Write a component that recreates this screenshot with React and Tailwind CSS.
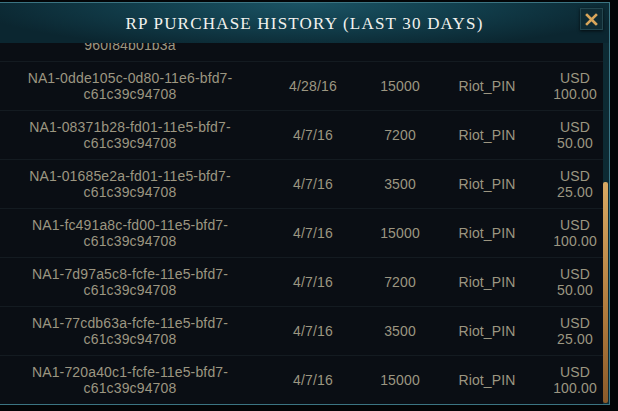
import React from "react";

const purchases = [
  { id: ["NA1-1b6e0f2c-0d81-11e6-9c4a-", "960f84b01b3a"], date: "4/28/16", rp: "7200", method: "", price: null },
  { id: ["NA1-0dde105c-0d80-11e6-bfd7-", "c61c39c94708"], date: "4/28/16", rp: "15000", method: "Riot_PIN", price: "100.00" },
  { id: ["NA1-08371b28-fd01-11e5-bfd7-", "c61c39c94708"], date: "4/7/16", rp: "7200", method: "Riot_PIN", price: "50.00" },
  { id: ["NA1-01685e2a-fd01-11e5-bfd7-", "c61c39c94708"], date: "4/7/16", rp: "3500", method: "Riot_PIN", price: "25.00" },
  { id: ["NA1-fc491a8c-fd00-11e5-bfd7-", "c61c39c94708"], date: "4/7/16", rp: "15000", method: "Riot_PIN", price: "100.00" },
  { id: ["NA1-7d97a5c8-fcfe-11e5-bfd7-", "c61c39c94708"], date: "4/7/16", rp: "7200", method: "Riot_PIN", price: "50.00" },
  { id: ["NA1-77cdb63a-fcfe-11e5-bfd7-", "c61c39c94708"], date: "4/7/16", rp: "3500", method: "Riot_PIN", price: "25.00" },
  { id: ["NA1-720a40c1-fcfe-11e5-bfd7-", "c61c39c94708"], date: "4/7/16", rp: "15000", method: "Riot_PIN", price: "100.00" },
];

function Row({ row }) {
  return (
    <div className="grid h-[49px] grid-cols-[260px_106px_68px_106px_63px] items-center border-b border-[#141b21] text-center leading-[16px]">
      <div>
        <div>{row.id[0]}</div>
        <div>{row.id[1]}</div>
      </div>
      <div>{row.date}</div>
      <div>{row.rp}</div>
      <div>{row.method}</div>
      <div className="pl-[7px]">
        {row.price && (
          <>
            <div>USD</div>
            <div>{row.price}</div>
          </>
        )}
      </div>
    </div>
  );
}

export default function App() {
  return (
    <div className="h-[411px] w-[618px] overflow-hidden bg-[#030507] pt-[2px]">
      <div className="relative flex h-[403px] w-[610px] flex-col border-t border-r border-b border-[#3b7482] bg-[#0d2a33]">
        {/* header */}
        <div className="flex h-[40px] shrink-0 items-center justify-center bg-[radial-gradient(ellipse_55%_120%_at_50%_0%,#1b5364_0%,#12404e_45%,#0b2630_100%)]">
          <h1 className="pt-[1px] font-['Liberation_Serif',serif] text-[17px] tracking-[1.2px] text-[#f2f2ee]">
            RP PURCHASE HISTORY (LAST 30 DAYS)
          </h1>
        </div>
        <button className="absolute top-[5px] right-[6px] flex h-[22px] w-[23px] items-center justify-center border border-[#24464f] bg-[#0f2b34] shadow-[0_1px_3px_rgba(0,0,0,0.7)]">
          <svg width="13" height="13" viewBox="0 0 13 13">
            <path d="M2 2 L11 11 M11 2 L2 11" stroke="#d9a65b" strokeWidth="2.6" strokeLinecap="square" />
          </svg>
        </button>

        {/* list */}
        <div className="flex min-h-0 flex-1">
          <div className="w-[603px] overflow-hidden bg-[#0a0e14] font-['Liberation_Sans',sans-serif] text-[14px] tracking-[0.15px] text-[#9c9681]">
            <div className="mt-[-30px]">
              {purchases.map((row, i) => (
                <Row key={i} row={row} />
              ))}
            </div>
          </div>
          <div className="flex-1">
            <div className="mt-[139px] h-[221px] w-[5px] rounded-[2px] bg-[linear-gradient(to_bottom,#d8a963,#b07a3c_60%,#8a5a2a)]" />
          </div>
        </div>
      </div>
    </div>
  );
}
